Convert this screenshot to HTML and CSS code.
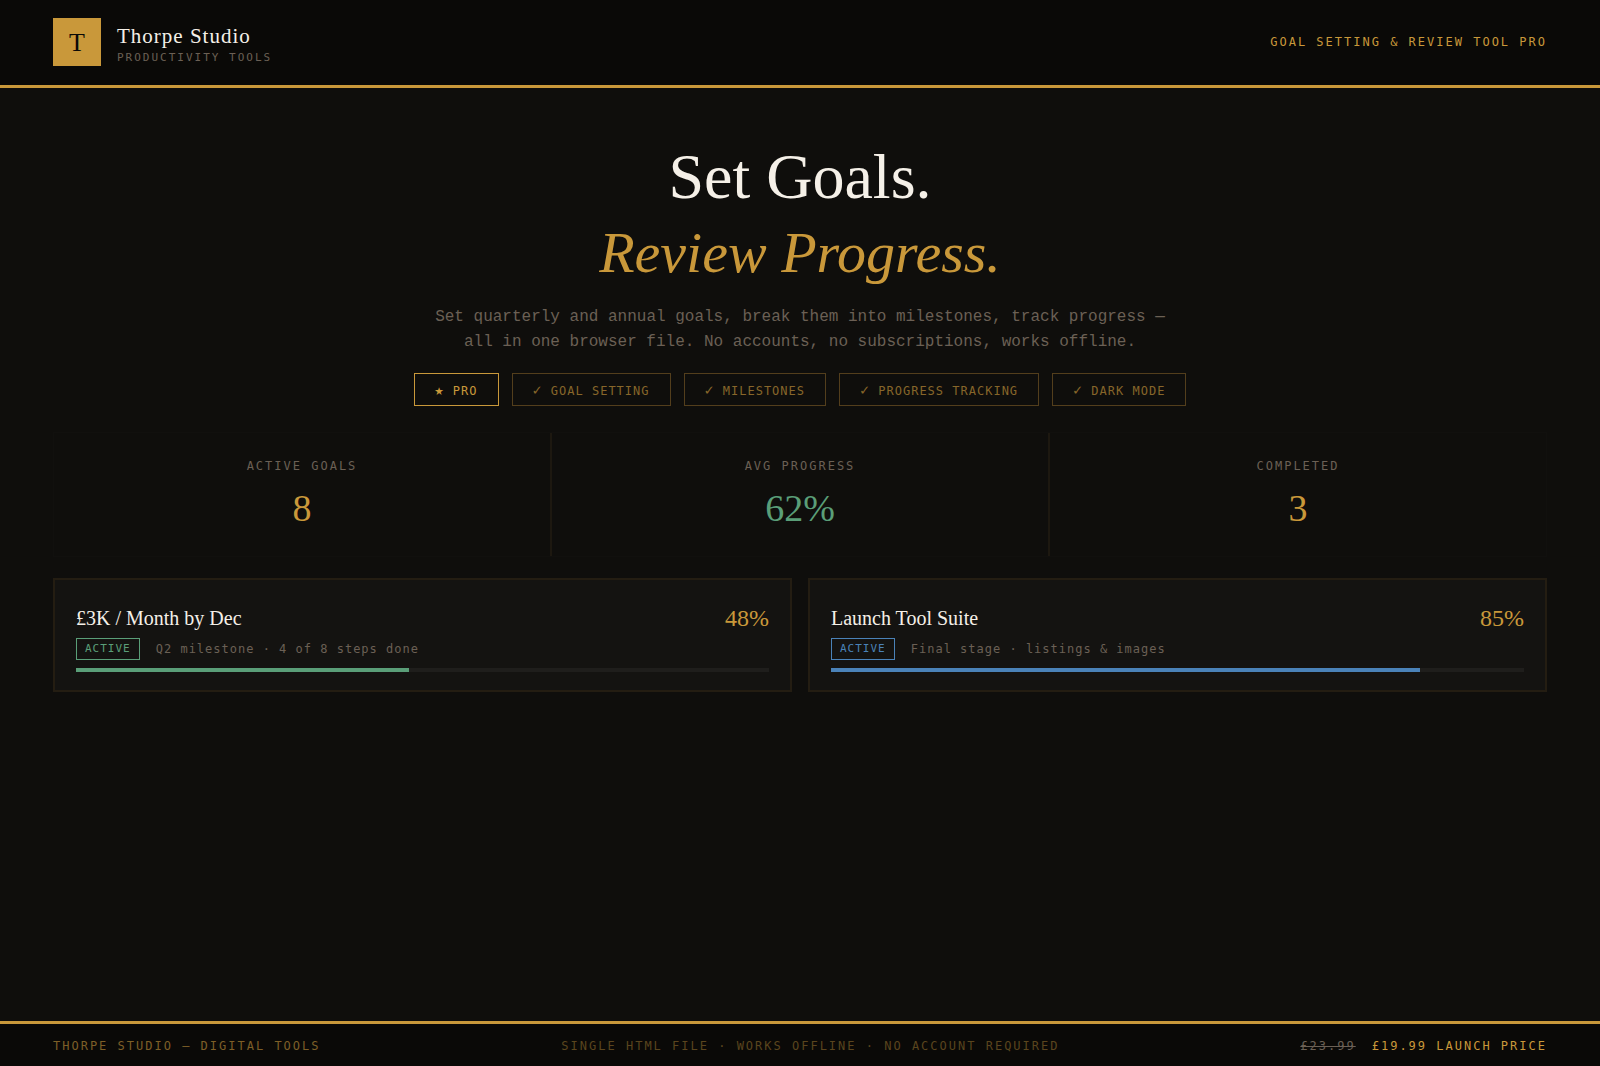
FILE: index.html
```html
<!DOCTYPE html>
<html lang="en">
<head>
<meta charset="utf-8">
<meta name="viewport" content="width=device-width, initial-scale=1">
<title>Goal Setting &amp; Review Tool Pro</title>
<link rel="stylesheet" href="styles.css">
</head>
<body>

<header class="top">
<div class="brand">
<div class="logo">T</div>
<div>
<div class="brand-name">Thorpe Studio</div>
<div class="brand-sub">PRODUCTIVITY TOOLS</div>
</div>
</div>
<div class="product">GOAL SETTING &amp; REVIEW TOOL PRO</div>
</header>

<main>
<h1>Set Goals.<em>Review Progress.</em></h1>
<p class="intro">Set quarterly and annual goals, break them into milestones, track progress — all in one browser file. No accounts, no subscriptions, works offline.</p>

<ul class="pills">
<li class="pill pro"><span class="mark">★</span> PRO</li>
<li class="pill"><span class="mark">✓</span> GOAL SETTING</li>
<li class="pill"><span class="mark">✓</span> MILESTONES</li>
<li class="pill"><span class="mark">✓</span> PROGRESS TRACKING</li>
<li class="pill"><span class="mark">✓</span> DARK MODE</li>
</ul>

<section class="stats">
<div class="stat">
<div class="stat-label">ACTIVE GOALS</div>
<div class="stat-num">8</div>
</div>
<div class="stat">
<div class="stat-label">AVG PROGRESS</div>
<div class="stat-num green">62%</div>
</div>
<div class="stat">
<div class="stat-label">COMPLETED</div>
<div class="stat-num">3</div>
</div>
</section>

<section class="goals">
<article class="goal green">
<div class="goal-head">
<h2>£3K / Month by Dec</h2>
<span class="pct">48%</span>
</div>
<div class="goal-meta">
<span class="badge">ACTIVE</span>
<span class="note">Q2 milestone · 4 of 8 steps done</span>
</div>
<div class="bar"><div class="fill" style="width:48%"></div></div>
</article>
<article class="goal blue">
<div class="goal-head">
<h2>Launch Tool Suite</h2>
<span class="pct">85%</span>
</div>
<div class="goal-meta">
<span class="badge">ACTIVE</span>
<span class="note">Final stage · listings &amp; images</span>
</div>
<div class="bar"><div class="fill" style="width:85%"></div></div>
</article>
</section>
</main>

<footer class="foot">
<span class="foot-brand">THORPE STUDIO — DIGITAL TOOLS</span>
<span class="foot-note">SINGLE HTML FILE · WORKS OFFLINE · NO ACCOUNT REQUIRED</span>
<span class="price"><s>£23.99</s>£19.99 LAUNCH PRICE</span>
</footer>

</body>
</html>
```
FILE: styles.css
```css
:root{
--bg:#0f0e0c;
--panel:#0a0907;
--card:#141311;
--gold:#c9983a;
--cream:#f5f0e8;
--muted:#6b6055;
--green:#5a9e78;
--blue:#4a82b8;
--serif:"Liberation Serif",serif;
--mono:"DejaVu Sans Mono",monospace;
}
*{box-sizing:border-box;margin:0;padding:0;}
body{min-height:100vh;display:flex;flex-direction:column;background:var(--bg);color:var(--cream);font:12px/16px var(--mono);}

/* header */
.top{display:flex;align-items:center;justify-content:space-between;padding:18px 53px 19px;background:var(--panel);border-bottom:3px solid var(--gold);}
.brand{display:flex;align-items:center;gap:16px;}
.logo{width:48px;height:48px;background:var(--gold);color:var(--panel);font:26px/50px var(--serif);text-align:center;}
.brand-name{font:21px/32px var(--serif);letter-spacing:1px;}
.brand-sub{font-size:11px;line-height:12px;letter-spacing:2px;color:var(--muted);}
.product{color:var(--gold);letter-spacing:2px;}

/* hero */
main{flex:1;padding:51px 53px 32px;}
h1{font:64px/76px var(--serif);text-align:center;}
h1 em{display:block;font-size:58px;color:var(--gold);}
.intro{max-width:760px;margin:14px auto 0;font:16px/25px "Liberation Mono",monospace;color:var(--muted);text-align:center;}
.pills{display:flex;flex-wrap:wrap;justify-content:center;gap:13px;margin-top:18px;list-style:none;}
.pill{padding:9px 20px 6px;border:1px solid #533e1c;color:#87662a;letter-spacing:1px;}
.pill.pro{border-color:var(--gold);color:var(--gold);}
.mark{font-size:15px;line-height:1;}

/* stats, the grid gap draws the dividers */
.stats{display:grid;grid-template-columns:repeat(3,1fr);gap:2px;margin-top:26px;background:#1d1810;border:1px solid #11100e;}
.stat{padding:25px 16px 26px;background:var(--bg);text-align:center;}
.stat-label{letter-spacing:2px;color:var(--muted);}
.stat-num{margin-top:12px;font:38px/44px var(--serif);color:var(--gold);}
.stat-num.green{color:var(--green);}

/* goal cards */
.goals{display:grid;grid-template-columns:1fr 1fr;gap:16px;margin-top:21px;}
.goal{padding:24px 21px 18px;background:var(--card);border:2px solid #241d12;}
.goal.green{--accent:var(--green);}
.goal.blue{--accent:var(--blue);}
.goal-head{display:flex;align-items:center;justify-content:space-between;}
h2{font:20px/28px var(--serif);}
.pct{font:24px/28px var(--serif);color:var(--gold);}
.goal-meta{display:flex;align-items:center;gap:16px;margin-top:6px;}
.badge{padding:2px 8px;border:1px solid var(--accent);color:var(--accent);font-size:11px;line-height:16px;letter-spacing:1px;}
.note{color:var(--muted);letter-spacing:1px;}
.bar{height:4px;margin-top:8px;background:#1f1e1c;}
.fill{height:100%;background:var(--accent);}

/* footer */
.foot{display:flex;justify-content:space-between;padding:14px 53px 12px;background:var(--panel);border-top:3px solid var(--gold);letter-spacing:2px;}
.foot-brand{color:#7d5f27;}
.foot-note{color:#5a451e;}
.price{color:var(--gold);}
.price s{margin-right:16px;color:var(--muted);}
```
